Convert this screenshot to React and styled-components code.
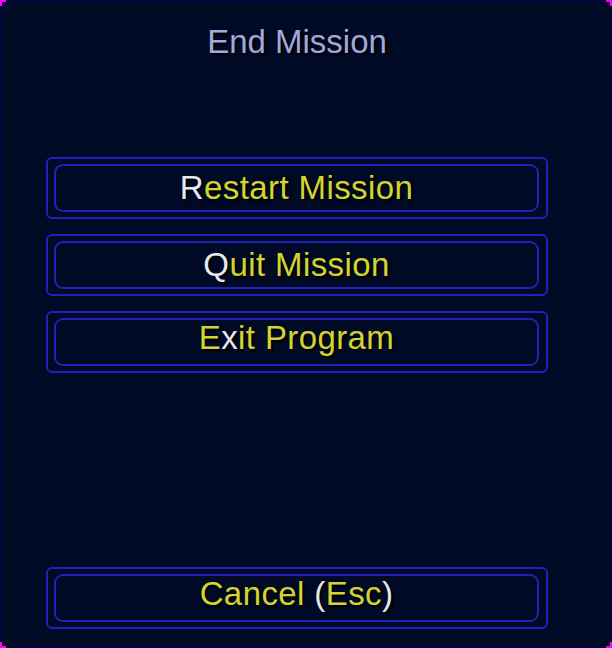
import React from 'react';
import styled, { createGlobalStyle } from 'styled-components';

const Global = createGlobalStyle`
  html, body {
    margin: 0;
    padding: 0;
    background: #000a24;
  }
  * { box-sizing: border-box; }
`;

const Frame = styled.div`
  position: relative;
  width: 612px;
  height: 648px;
  border: 2px solid #05063f;
  background: #000a24;
  display: flex;
  flex-direction: column;
  padding: 20px 62px 17px 44px;
  font-family: "Liberation Sans", Arial, sans-serif;
`;

const Corner = styled.span`
  position: absolute;
  width: 6px;
  height: 6px;
  border-color: #ff00ff;
  border-style: solid;
  border-width: 0;
  ${p => p.$top ? 'top: -2px;' : 'bottom: -2px;'}
  ${p => p.$left ? 'left: -2px;' : 'right: -2px;'}
  ${p => p.$top ? 'border-top-width: 2px;' : 'border-bottom-width: 2px;'}
  ${p => p.$left ? 'border-left-width: 2px;' : 'border-right-width: 2px;'}
`;

const Title = styled.h1`
  margin: 0;
  height: 40px;
  line-height: 40px;
  font-size: 33px;
  font-weight: normal;
  text-align: center;
  color: #a3a8d8;
  text-shadow: 2px 2px 2px #000;
`;

const Menu = styled.div`
  display: flex;
  flex-direction: column;
  gap: 15px;
  margin-top: 95px;
`;

const Outer = styled.div`
  height: 62px;
  border: 2px solid #2020bc;
  border-radius: 6px;
  padding: 5px 7px 5px 6px;
  ${p => p.$bottom && 'margin-top: auto;'}
`;

const Inner = styled.button`
  width: 100%;
  height: 100%;
  border: 2px solid #2020bc;
  border-radius: 9px;
  background: transparent;
  display: flex;
  align-items: center;
  justify-content: center;
  padding: 0 0 ${p => (p.$lift ? '8px' : '0')};
  font-family: inherit;
  font-size: 33px;
  letter-spacing: 0.4px;
  color: #d4d430;
  text-shadow: 2px 2px 2px #000;
  cursor: pointer;
`;

const Label = styled.span`
  white-space: pre;
`;

const Key = styled.span`
  color: #e6e8f0;
`;

const MenuButton = ({ children, bottom, lift }) => (
  <Outer $bottom={bottom}>
    <Inner $lift={lift}>
      <Label>{children}</Label>
    </Inner>
  </Outer>
);

export default function App() {
  return (
    <>
      <Global />
      <Frame>
        <Corner $top $left />
        <Corner $top />
        <Corner $left />
        <Corner />
        <Title>End Mission</Title>
        <Menu>
          <MenuButton><Key>R</Key>estart Mission</MenuButton>
          <MenuButton><Key>Q</Key>uit Mission</MenuButton>
          <MenuButton lift>E<Key>x</Key>it Program</MenuButton>
        </Menu>
        <MenuButton bottom lift>Cancel <Key>(</Key>Esc<Key>)</Key></MenuButton>
      </Frame>
    </>
  );
}
